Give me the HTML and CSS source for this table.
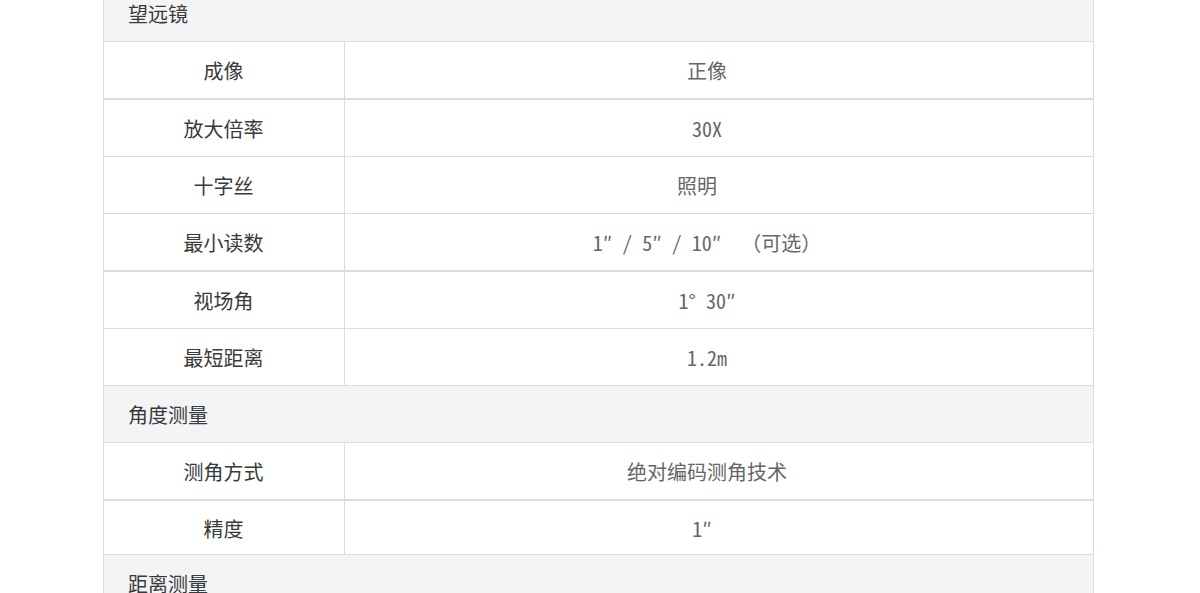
FILE: index.html
```html
<!DOCTYPE html>
<html lang="zh-CN">
<head>
<meta charset="utf-8">
<title>参数</title>
<link rel="stylesheet" href="styles.css">
</head>
<body>
<div class="page">
  <table class="spec">
    <colgroup><col class="c-label"><col class="c-value"></colgroup>
    <tbody>
      <tr class="sec"><td colspan="2">望远镜</td></tr>
      <tr class="thick"><td class="lbl">成像</td><td class="val">正像</td></tr>
      <tr><td class="lbl">放大倍率</td><td class="val">30X</td></tr>
      <tr><td class="lbl">十字丝</td><td class="val">照明&nbsp;&nbsp;</td></tr>
      <tr class="thick"><td class="lbl">最小读数</td><td class="val">1″ / 5″ / 10″&nbsp; （可选）</td></tr>
      <tr><td class="lbl">视场角</td><td class="val">1° 30″</td></tr>
      <tr><td class="lbl">最短距离</td><td class="val">1.2m</td></tr>
      <tr class="sec"><td colspan="2">角度测量</td></tr>
      <tr class="thick"><td class="lbl">测角方式</td><td class="val">绝对编码测角技术</td></tr>
      <tr class="short"><td class="lbl">精度</td><td class="val">1″&nbsp;</td></tr>
      <tr class="sec"><td colspan="2">距离测量</td></tr>
    </tbody>
  </table>
</div>
</body>
</html>
```
FILE: styles.css
```css
html, body {
  margin: 0;
  padding: 0;
  background: #fff;
}
body {
  font-family: "Noto Sans Mono CJK SC", "Noto Sans CJK SC", sans-serif;
  font-size: 20px;
  color: #3a3a3a;
  overflow: hidden;
}
.page {
  width: 991px;
  margin: -16px 0 0 103px;
}
.spec {
  width: 991px;
  border-collapse: collapse;
  border: 1px solid #dcdcdc;
  table-layout: fixed;
}
.c-label { width: 241px; }
.spec td {
  border: 1px solid #dcdcdc;
  height: 54px;
  padding: 2px 0 0;
  vertical-align: middle;
  line-height: 22px;
}
.spec tr.thick td { border-bottom-width: 2px; }
.spec tr.short td { height: 51px; }
.spec tr.sec td {
  background: #f3f4f6;
  text-align: left;
  padding-left: 24px;
}
.spec td.lbl {
  text-align: center;
  padding-right: 1px;
}
.spec td.val {
  text-align: center;
  color: #666;
  padding-right: 24px;
}
```
